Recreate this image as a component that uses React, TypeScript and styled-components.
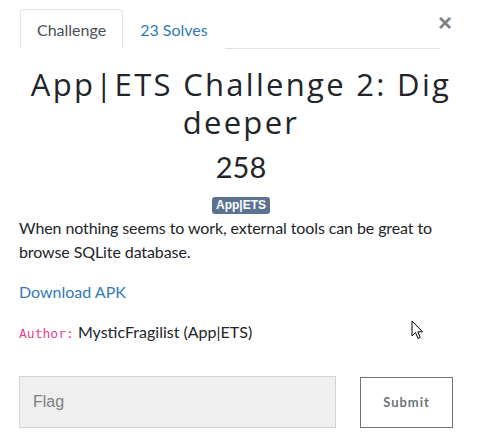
import React from "react";
import styled, { createGlobalStyle } from "styled-components";

const Global = createGlobalStyle`
  html, body { margin: 0; padding: 0; background: #fff; }
  body { font-family: Lato, "Open Sans", sans-serif; color: #212529; }
  * { box-sizing: border-box; }
`;

const Modal = styled.div`
  width: 482px;
  height: 440px;
  padding: 9px 19px 0 19px;
  position: relative;
`;

const Close = styled.button`
  position: absolute;
  top: 11px;
  right: 30px;
  border: none;
  background: none;
  padding: 0;
  font-family: "Liberation Sans", sans-serif;
  font-size: 24px;
  font-weight: 700;
  line-height: 1;
  color: #808080;
  cursor: pointer;
`;

const Tabs = styled.div`
  display: flex;
  margin-left: 1px;
  width: 420px;
  border-bottom: 1px solid #dee2e6;
`;

const Tab = styled.div<{ $active?: boolean }>`
  height: 40px;
  margin-bottom: -1px;
  padding: 0 16px;
  display: flex;
  align-items: center;
  font-size: 16px;
  border: 1px solid ${(p) => (p.$active ? "#dee2e6" : "transparent")};
  border-bottom-color: ${(p) => (p.$active ? "#fff" : "transparent")};
  border-radius: 4px 4px 0 0;
  color: ${(p) => (p.$active ? "#495057" : "#337ab7")};
  background: #fff;
`;

const Body = styled.div`
  display: flex;
  flex-direction: column;
`;

const Title = styled.h1`
  margin: 16px 0 0;
  font-family: "Open Sans", sans-serif;
  font-weight: 400;
  font-size: 31px;
  letter-spacing: 2.3px;
  line-height: 38px;
  text-align: center;
  color: #212529;
`;

const Value = styled.div`
  margin-top: 9px;
  font-size: 29px;
  line-height: 34px;
  text-align: center;
  color: #212529;
`;

const BadgeRow = styled.div`
  display: flex;
  justify-content: center;
  margin-top: 13px;
`;

const Badge = styled.span`
  background: #5b7290;
  color: #fff;
  font-family: "Liberation Sans", sans-serif;
  font-weight: 700;
  font-size: 12px;
  line-height: 17px;
  padding: 0 4px;
  border-radius: 3px;
`;

const Desc = styled.p`
  margin: 2px 0 0;
  font-size: 16px;
  line-height: 24px;
  letter-spacing: -0.1px;
  color: #212529;
`;

const Link = styled.a`
  display: block;
  margin-top: 16px;
  font-size: 16px;
  line-height: 24px;
  color: #337ab7;
  text-decoration: none;
`;

const AuthorLine = styled.p`
  margin: 16px 0 0;
  font-size: 16px;
  line-height: 24px;
`;

const Code = styled.code`
  font-family: "DejaVu Sans Mono", monospace;
  font-size: 13px;
  color: #e83e8c;
`;

const Form = styled.div`
  display: flex;
  gap: 24px;
  margin-top: 30px;
  align-items: center;
`;

const Input = styled.input`
  width: 317px;
  height: 52px;
  background: #efefef;
  border: 1px solid #ced4da;
  padding: 0 13px;
  font-family: "Liberation Sans", sans-serif;
  font-size: 16px;
  color: #495057;
  &::placeholder { color: #7a7f85; }
`;

const Submit = styled.button`
  width: 93px;
  height: 51px;
  background: #fff;
  border: 1px solid #6c757d;
  font-family: Lato, sans-serif;
  font-weight: 700;
  font-size: 13px;
  letter-spacing: 1px;
  color: #6c757d;
`;

const Cursor = styled.svg`
  position: absolute;
  left: 411px;
  top: 320px;
`;

export default function App() {
  return (
    <>
      <Global />
      <Modal>
        <Close>×</Close>
        <Tabs>
          <Tab $active>Challenge</Tab>
          <Tab>23 Solves</Tab>
        </Tabs>
        <Body>
          <Title>App|ETS Challenge 2: Dig deeper</Title>
          <Value>258</Value>
          <BadgeRow>
            <Badge>App|ETS</Badge>
          </BadgeRow>
          <Desc>
            When nothing seems to work, external tools can be great to browse SQLite database.
          </Desc>
          <Link href="#">Download APK</Link>
          <AuthorLine>
            <Code>Author:</Code> MysticFragilist (App|ETS)
          </AuthorLine>
          <Form>
            <Input placeholder="Flag" />
            <Submit>Submit</Submit>
          </Form>
        </Body>
        <Cursor width="13" height="20" viewBox="0 0 13 20">
          <path d="M1 1 L1 16 L4.5 12.5 L7 18.5 L9.2 17.5 L6.8 11.8 L11.5 11.8 Z" fill="#fff" stroke="#000" strokeWidth="1" strokeLinejoin="round" />
        </Cursor>
      </Modal>
    </>
  );
}
